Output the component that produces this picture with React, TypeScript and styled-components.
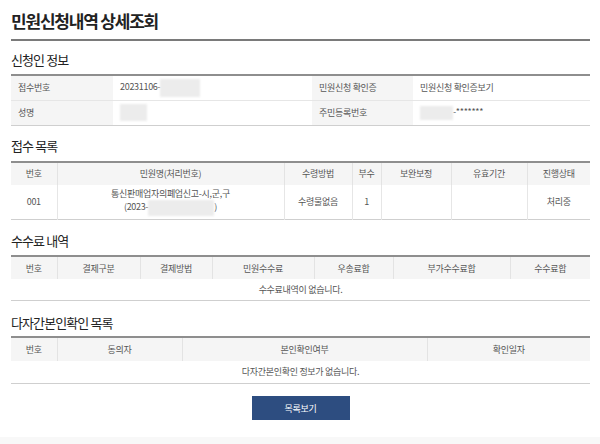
import styled, { createGlobalStyle } from "styled-components";

const GlobalStyle = createGlobalStyle`
  body {
    margin: 0;
    background: #fff;
    font-family: "Noto Sans CJK KR", "Noto Sans", sans-serif;
    color: #444;
  }
`;

const Page = styled.div`
  width: 600px;
  height: 444px;
  box-sizing: border-box;
  padding: 8px 10px 0 11px;
  background: linear-gradient(#fff 437px, #f8f8f8 437px);
`;

const Title = styled.h1`
  margin: 0;
  padding-bottom: 5px;
  font-size: 17px;
  line-height: 26px;
  font-weight: 700;
  color: #222;
  letter-spacing: -1.2px;
  border-bottom: 2px solid #7a7a7a;
`;

const Heading = styled.h2<{ $top: number; $bottom: number }>`
  margin: ${(p) => p.$top}px 0 ${(p) => p.$bottom}px;
  font-size: 13px;
  line-height: 22px;
  font-weight: 400;
  color: #222;
  letter-spacing: -0.9px;
`;

const Table = styled.table`
  width: 100%;
  border-collapse: collapse;
  table-layout: fixed;
  border-top: 2px solid #8e8e8e;
  border-bottom: 1px solid #cfcfcf;
  font-size: 9px;
  letter-spacing: -0.3px;
  color: #555;
`;

const Row = styled.tr<{ $h: number }>`
  height: ${(p) => p.$h}px;
  & + & {
    border-top: 1px solid #e6e6e6;
  }
`;

const Th = styled.th`
  background: #f5f5f5;
  font-weight: 400;
  text-align: center;
  padding: 0;
  border-left: 1px solid #e3e3e3;
  &:first-child {
    border-left: none;
  }
`;

const Td = styled.td<{ $label?: boolean }>`
  padding: 0 7px;
  text-align: left;
  background: ${(p) => (p.$label ? "#f5f5f5" : "#fff")};
  line-height: 14px;
`;

const Cell = styled.td`
  padding: 0 4px;
  text-align: center;
  line-height: 13px;
  border-left: 1px solid #e6e6e6;
  &:first-child {
    border-left: none;
  }
`;

const Empty = styled.td`
  text-align: center;
  padding: 0;
`;

const Masked = styled.span<{ $w: number; $h: number }>`
  display: inline-block;
  vertical-align: middle;
  width: ${(p) => p.$w}px;
  height: ${(p) => p.$h}px;
  background: #ececec;
  filter: blur(1px);
`;

const Actions = styled.div`
  display: flex;
  justify-content: center;
  margin-top: 12px;
`;

const Button = styled.button`
  width: 98px;
  height: 24px;
  border: none;
  background: #2d4d80;
  color: #fff;
  font-family: inherit;
  font-size: 9px;
  letter-spacing: -0.3px;
  padding: 0;
`;

const receiptCols = [46, 227, 68, 29, 70, 76, 63];
const feeCols = [46, 83, 72, 102, 79, 117, 80];
const multiCols = [46, 125, 245, 163];

const Cols = ({ widths }: { widths: number[] }) => (
  <colgroup>
    {widths.map((w, i) => (
      <col key={i} style={{ width: w }} />
    ))}
  </colgroup>
);

export default function App() {
  return (
    <Page>
      <GlobalStyle />
      <Title>민원신청내역 상세조회</Title>

      <Heading $top={8} $bottom={3}>신청인 정보</Heading>
      <Table>
        <Cols widths={[102, 199, 101, 177]} />
        <tbody>
          <Row $h={25}>
            <Td $label>접수번호</Td>
            <Td>
              20231106-<Masked $w={40} $h={18} />
            </Td>
            <Td $label>민원신청 확인증</Td>
            <Td>민원신청 확인증보기</Td>
          </Row>
          <Row $h={25}>
            <Td $label>성명</Td>
            <Td>
              <Masked $w={27} $h={17} />
            </Td>
            <Td $label>주민등록번호</Td>
            <Td>
              <Masked $w={33} $h={14} />-*******
            </Td>
          </Row>
        </tbody>
      </Table>

      <Heading $top={9} $bottom={4}>접수 목록</Heading>
      <Table>
        <Cols widths={receiptCols} />
        <thead>
          <Row $h={23}>
            {["번호", "민원명(처리번호)", "수령방법", "부수", "보완보정", "유효기간", "진행상태"].map(
              (h) => (
                <Th key={h}>{h}</Th>
              )
            )}
          </Row>
        </thead>
        <tbody>
          <Row $h={35}>
            <Cell>001</Cell>
            <Cell>
              통신판매업자의폐업신고-시,군,구
              <br />
              (2023-<Masked $w={66} $h={16} />)
            </Cell>
            <Cell>수령물없음</Cell>
            <Cell>1</Cell>
            <Cell />
            <Cell />
            <Cell>처리중</Cell>
          </Row>
        </tbody>
      </Table>

      <Heading $top={10} $bottom={3}>수수료 내역</Heading>
      <Table>
        <Cols widths={feeCols} />
        <thead>
          <Row $h={23}>
            {["번호", "결제구분", "결제방법", "민원수수료", "우송료합", "부가수수료합", "수수료합"].map(
              (h) => (
                <Th key={h}>{h}</Th>
              )
            )}
          </Row>
        </thead>
        <tbody>
          <Row $h={21}>
            <Empty colSpan={7}>수수료내역이 없습니다.</Empty>
          </Row>
        </tbody>
      </Table>

      <Heading $top={11} $bottom={2}>다자간본인확인 목록</Heading>
      <Table>
        <Cols widths={multiCols} />
        <thead>
          <Row $h={24}>
            {["번호", "동의자", "본인확인여부", "확인일자"].map((h) => (
              <Th key={h}>{h}</Th>
            ))}
          </Row>
        </thead>
        <tbody>
          <Row $h={23}>
            <Empty colSpan={4}>다자간본인확인 정보가 없습니다.</Empty>
          </Row>
        </tbody>
      </Table>

      <Actions>
        <Button>목록보기</Button>
      </Actions>
    </Page>
  );
}
